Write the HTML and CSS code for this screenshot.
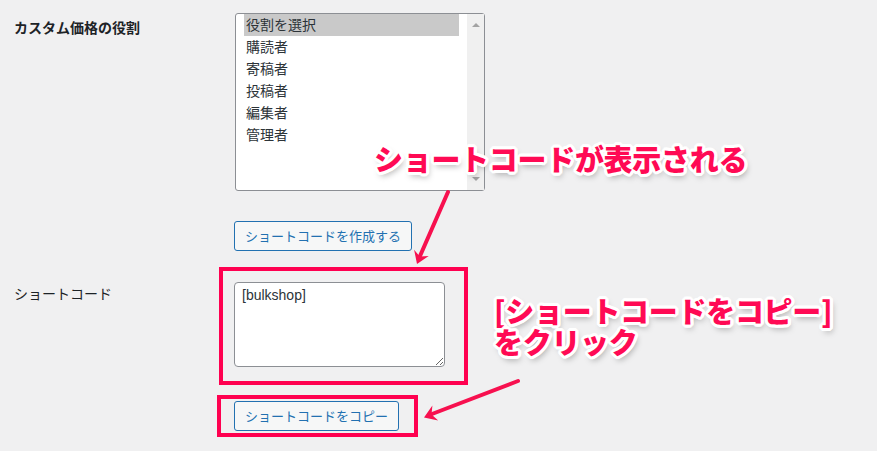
FILE: index.html
```html
<!DOCTYPE html>
<html lang="ja">
<head>
<meta charset="utf-8">
<link rel="stylesheet" href="styles.css">
</head>
<body>
<div class="page">
  <div class="row row-role">
    <div class="label label-bold">カスタム価格の役割</div>
    <div class="field">
      <div class="listbox">
        <div class="options">
          <div class="opt selected">役割を選択</div>
          <div class="opt">購読者</div>
          <div class="opt">寄稿者</div>
          <div class="opt">投稿者</div>
          <div class="opt">編集者</div>
          <div class="opt">管理者</div>
        </div>
        <div class="scrollbar">
          <span class="arr up"></span>
          <span class="arr down"></span>
        </div>
      </div>
      <button class="btn btn-create">ショートコードを作成する</button>
    </div>
  </div>
  <div class="row row-code">
    <div class="label label-code">ショートコード</div>
    <div class="field">
      <textarea class="code" readonly>[bulkshop]</textarea>
      <button class="btn btn-copy">ショートコードをコピー</button>
    </div>
  </div>

  <div class="frame frame-code"></div>
  <div class="frame frame-copy"></div>

  <svg class="arrows" width="877" height="451" viewBox="0 0 877 451">
    <line x1="448" y1="192" x2="420" y2="256" stroke="#f7104f" stroke-width="4" stroke-linecap="round"/>
    <polygon points="417,264 428.7,256.1 419.8,256.6 414.1,249.7" fill="#f7104f"/>
    <line x1="518" y1="381" x2="432" y2="414" stroke="#f7104f" stroke-width="4" stroke-linecap="round"/>
    <polygon points="424,417.5 438.2,420.5 431.5,414.5 432.4,405.5" fill="#f7104f"/>
  </svg>

  <div class="note note-shown">ショートコードが表示される</div>
  <div class="note note-copy">
    <div class="note-line">[ショートコードをコピー]</div>
    <div class="note-line">をクリック</div>
  </div>
</div>
</body>
</html>
```

FILE: styles.css
```css
html, body {
  margin: 0;
  padding: 0;
  background: #f0f0f1;
}
body {
  font-family: "Noto Sans CJK JP", "Noto Sans", sans-serif;
  color: #1d2327;
  width: 877px;
  height: 451px;
  overflow: hidden;
}
.page {
  position: relative;
  width: 877px;
  height: 451px;
  padding: 13px 0 0 14px;
  box-sizing: border-box;
}
.row {
  display: grid;
  grid-template-columns: 220px auto;
}
.label {
  font-size: 14px;
  line-height: 20px;
  color: #1d2327;
}
.label-bold {
  font-weight: 700;
  padding-top: 4px;
}
.label-code {
  padding-top: 32px;
}
.field {
  display: flex;
  flex-direction: column;
  align-items: flex-start;
}
.listbox {
  margin-left: 1px;
  width: 250px;
  height: 178px;
  box-sizing: border-box;
  border: 1px solid #8c8f94;
  border-radius: 3px;
  background: #fff;
  display: flex;
}
.options {
  flex: 1;
  padding: 0 8px 0 8px;
}
.opt {
  height: 22px;
  line-height: 21px;
  font-size: 14px;
  padding-left: 2px;
  color: #2c3338;
}
.opt.selected {
  background: #c9c9c9;
}
.scrollbar {
  width: 17px;
  background: #f0f0f0;
  display: flex;
  flex-direction: column;
  justify-content: space-between;
  align-items: center;
  padding: 9px 0 9px;
  box-sizing: border-box;
}
.arr {
  width: 0;
  height: 0;
  border-left: 4px solid transparent;
  border-right: 4px solid transparent;
}
.arr.up {
  border-bottom: 4px solid #a3a3a3;
}
.arr.down {
  border-top: 4px solid #a3a3a3;
}
.btn {
  font-family: "Noto Sans CJK JP", "Noto Sans", sans-serif;
  font-size: 13px;
  line-height: 28px;
  height: 30px;
  padding: 0 10px;
  color: #2271b1;
  background: #f6f7f7;
  border: 1px solid #2271b1;
  border-radius: 3px;
  box-sizing: border-box;
  cursor: pointer;
  white-space: nowrap;
}
.btn-create {
  margin-top: 30px;
  width: 178px;
}
.btn-copy {
  margin-top: 34px;
  width: 165px;
}
.code {
  margin-top: 31px;
  width: 211px;
  height: 85px;
  box-sizing: border-box;
  border: 1px solid #8c8f94;
  border-radius: 4px;
  background: #fff;
  padding: 2px 7px;
  font-family: "Liberation Sans", Arial, sans-serif;
  font-size: 14px;
  line-height: 20px;
  color: #2c3338;
  resize: vertical;
  outline: none;
}
.frame {
  position: absolute;
  border: 4px solid #ff0050;
  box-sizing: border-box;
}
.frame-code {
  left: 219px;
  top: 267px;
  width: 249px;
  height: 118px;
}
.frame-copy {
  left: 217px;
  top: 395px;
  width: 201px;
  height: 42px;
}
.arrows {
  position: absolute;
  left: 0;
  top: 0;
  pointer-events: none;
}
.note {
  position: absolute;
  font-family: "Noto Sans CJK JP", sans-serif;
  font-weight: 900;
  color: #ff0a54;
  white-space: nowrap;
  text-shadow:
    3px 0 0 #fff, -3px 0 0 #fff, 0 3px 0 #fff, 0 -3px 0 #fff,
    2px 2px 0 #fff, -2px 2px 0 #fff, 2px -2px 0 #fff, -2px -2px 0 #fff,
    3px 1px 0 #fff, -3px 1px 0 #fff, 3px -1px 0 #fff, -3px -1px 0 #fff,
    1px 3px 0 #fff, -1px 3px 0 #fff, 1px -3px 0 #fff, -1px -3px 0 #fff,
    2px 4px 6px rgba(0,0,0,0.35);
}
.note-shown {
  left: 374px;
  top: 136px;
  font-size: 29px;
  line-height: 44px;
  letter-spacing: -0.3px;
}
.note-copy {
  left: 494px;
  top: 300px;
  font-size: 29px;
  letter-spacing: -0.3px;
}
.note-line {
  height: 31px;
  line-height: 21px;
}
```
